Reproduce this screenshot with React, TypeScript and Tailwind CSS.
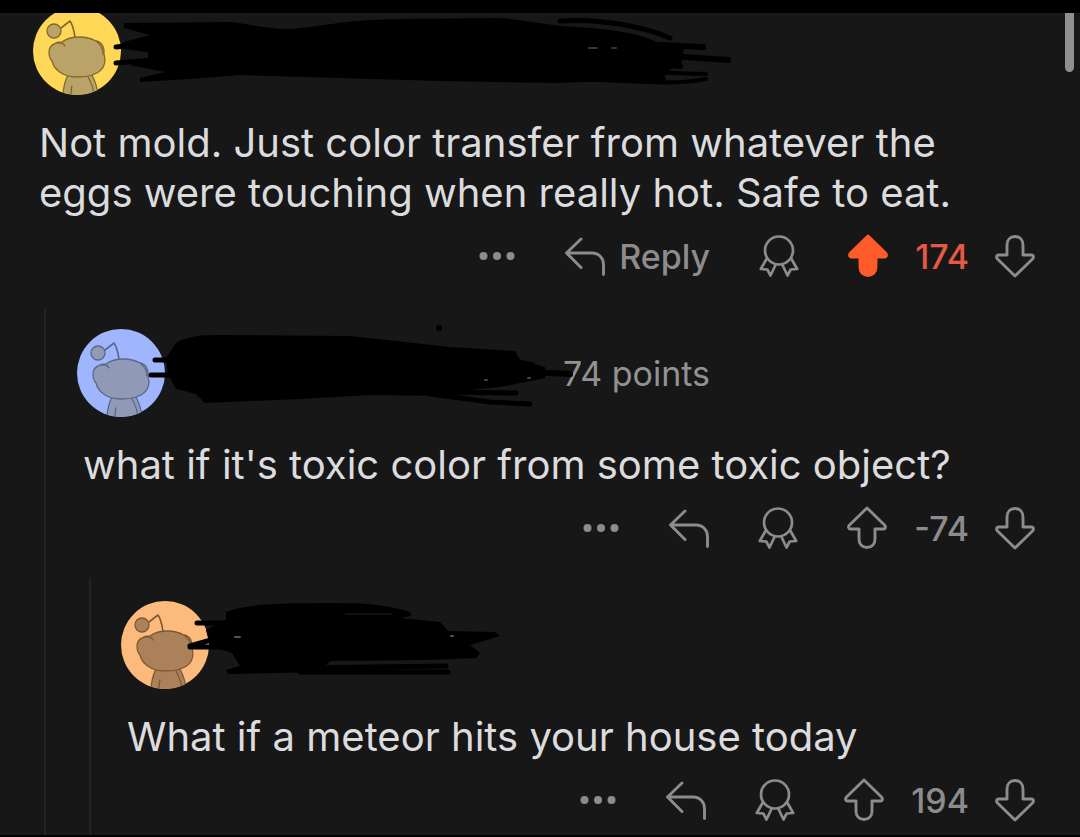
import type { ReactNode } from "react";

type Palette = { bg: string; body: string; line: string };

const yellow: Palette = { bg: "#ffd858", body: "#b9a368", line: "#80692c" };
const blue: Palette = { bg: "#9fb5fd", body: "#9099b6", line: "#5c6789" };
const orange: Palette = { bg: "#fcba7d", body: "#aa8159", line: "#7d5933" };

function Avatar({ palette, id }: { palette: Palette; id: string }) {
  return (
    <svg viewBox="0 0 88 88" className="size-[88px] shrink-0" aria-hidden="true">
      <clipPath id={id}>
        <circle cx="44" cy="44" r="44" />
      </clipPath>
      <g clipPath={`url(#${id})`} stroke={palette.line} strokeWidth="1.3" strokeLinecap="round" strokeLinejoin="round">
        <rect width="88" height="88" fill={palette.bg} stroke="none" />
        <path d="M35 68C32 74 30 80 30 90H65C65 82 62 74 59 68Z" fill={palette.body} />
        <path d="M39 79C38 82 38 85 38 90M55 70C59 77 61 82 61 90" fill="none" />
        <path
          d="M16 45C16 38 23 35 29 35C34 31 41 30 47 30C54 30 59 32 63 34C69 35 72 41 71 47C74 58 70 70 44 70C29 70 21 62 19 54C17 52 16 49 16 45Z"
          fill={palette.body}
        />
        <path d="M25 36C29 35 31 37 32 39M63 34C67 37 70 41 70 47" fill="none" />
        <circle cx="21" cy="24" r="7" fill={palette.body} />
        <path d="M28 21L37 14C40 18 41 24 42 30" fill="none" strokeWidth="1.6" />
      </g>
    </svg>
  );
}

const stroke = {
  fill: "none",
  stroke: "currentColor",
  strokeWidth: 2.9,
  strokeLinecap: "round",
  strokeLinejoin: "round",
} as const;

function Dots() {
  return (
    <svg viewBox="0 0 36 12" className="h-3 w-9" fill="currentColor" aria-hidden="true">
      <circle cx="4.5" cy="6" r="4" />
      <circle cx="18" cy="6" r="4" />
      <circle cx="31.5" cy="6" r="4" />
    </svg>
  );
}

function ReplyIcon() {
  return (
    <svg viewBox="0 0 40 44" className="h-11 w-10" {...stroke} aria-hidden="true">
      <path d="M16 5L1.5 19L16 33.5M1.5 19H27C34 19 38.5 24 38.5 31V40.5" />
    </svg>
  );
}

function AwardIcon() {
  return (
    <svg viewBox="0 0 40 44" className="h-11 w-10" {...stroke} strokeWidth={2.7} aria-hidden="true">
      <circle cx="20" cy="16.5" r="14" />
      <path d="M7.5 25L1.8 35L8.3 35.5L11.5 41.5L16.5 31M32.5 25L38.2 35L31.7 35.5L28.5 41.5L23.5 31" />
    </svg>
  );
}

function VoteIcon({ down = false, active = false }: { down?: boolean; active?: boolean }) {
  return (
    <svg
      viewBox="0 0 40 44"
      className={down ? "h-11 w-10 rotate-180" : "h-11 w-10"}
      {...stroke}
      fill={active ? "currentColor" : "none"}
      aria-hidden="true"
    >
      <path d="M20 2L37.5 19C39.2 21 38.3 23 36.5 23H28V33C28 38 25 41.500 20 41.500C15 41.500 12 38 12 33V23H3.500C1.700 23 .8 21 2.500 19Z" />
    </svg>
  );
}

function Actions({ score, upvoted = false, showReplyLabel = false }: { score: string; upvoted?: boolean; showReplyLabel?: boolean }) {
  return (
    <div className="mt-[13px] flex h-[50px] items-center justify-end pr-[45px] text-[34px] font-medium text-[#8c8c8e]">
      <button type="button" aria-label="More options" className="mr-[50px]">
        <Dots />
      </button>
      <button type="button" aria-label="Reply" className="mr-[49px] flex items-center gap-[14px]">
        <ReplyIcon />
        {showReplyLabel && <span>Reply</span>}
      </button>
      <button type="button" aria-label="Give award" className="mr-[49px]">
        <AwardIcon />
      </button>
      <button type="button" aria-label="Upvote" className={upvoted ? "mr-[27px] text-[#ff5a29]" : "mr-[27px]"}>
        <VoteIcon active={upvoted} />
      </button>
      <span className={upvoted ? "mr-[26px] text-[#e55a45]" : "mr-[26px]"}>{score}</span>
      <button type="button" aria-label="Downvote">
        <VoteIcon down />
      </button>
    </div>
  );
}

function Comment({ header, children }: { header: ReactNode; children: ReactNode }) {
  return (
    <>
      <header className="flex items-center">{header}</header>
      <p className="mt-[23px] pr-24 pl-1.5 text-[40px] leading-[50px] text-[#dcdcde]">{children}</p>
    </>
  );
}

function ScribbleLong() {
  return (
    <svg viewBox="101 7 640 88" className="relative -ml-5 h-[88px] w-[640px] shrink-0 overflow-visible" aria-hidden="true">
      <path d="M124 23L230 22C250 24 265 29 290 29C320 27 340 20 400 19L500 18C525 20 545 25 575 27C610 29 640 33 656 42L684 46L682 62L664 74L668 84C640 85 600 80 560 83L440 81L240 75L190 79L140 82L140 78L165 72L130 65L148 60L148 52L116 48L124 42L150 35L124 28Z" />
      <g fill="none" stroke="#000" strokeLinecap="round">
        <path d="M116 47L160 42M116 63L165 59M560 21C600 18 645 27 670 38" strokeWidth="5" />
        <path d="M640 44L703 47M640 54L728 60M640 62L680 66" strokeWidth="6" />
        <path d="M640 72L706 74M640 81C670 84 690 82 706 79" strokeWidth="4" />
      </g>
      <path d="M589 48H597M612 48H616" stroke="#363636" strokeWidth="2" strokeLinecap="round" />
    </svg>
  );
}

function ScribbleMedium() {
  return (
    <svg viewBox="145 329 420 88" className="relative -ml-5 h-[88px] w-[420px] shrink-0 overflow-visible" aria-hidden="true">
      <path d="M176 343C190 334 210 335 230 335L350 336L450 347L515 351L520 360L545 367L545 378L500 387L470 390L450 396L370 395L300 399L205 403L196 394L176 389L168 374L166 358Z" />
      <g fill="none" stroke="#000" strokeLinecap="round">
        <path d="M155 360H185M151 375H185" strokeWidth="5" />
        <path d="M480 356L532 365M480 379L530 372L570 374" strokeWidth="6" />
        <path d="M440 392L516 393M430 394L490 402L530 404" strokeWidth="5" />
      </g>
      <circle cx="439" cy="328" r="3" />
      <path d="M485 380H487M528 378H530" stroke="#444" strokeWidth="2" strokeLinecap="round" />
    </svg>
  );
}

function ScribbleShort() {
  return (
    <svg viewBox="189 601 320 88" className="relative -ml-5 h-[88px] w-[320px] shrink-0 overflow-visible" aria-hidden="true">
      <path d="M226 612C250 603 290 603 340 603C370 603 390 606 410 612L411 616L400 618L440 622L448 631L495 632L500 636L470 645L480 653L476 658L430 660L330 661L320 672L228 674L226 670L240 666L232 653L210 646L206 630L226 620Z" />
      <g fill="none" stroke="#000" strokeLinecap="round">
        <path d="M197 623H240M190 646L225 636M190 647H235" strokeWidth="5" />
        <path d="M300 668L446 666M300 672L448 672" strokeWidth="5" />
      </g>
      <path d="M345 614H392" stroke="#101010" strokeWidth="2" />
      <path d="M235 637H240M451 636H453" stroke="#555" strokeWidth="2" strokeLinecap="round" />
    </svg>
  );
}

export default function App() {
  return (
    <div className="min-h-screen bg-black pt-[13px] pb-0.5 font-[Inter,sans-serif]">
      <main className="relative overflow-hidden bg-[#171717]">
        <div className="absolute top-0 right-1.5 h-[59px] w-[9px] rounded-b-full bg-[#8f8f8f]" />
        <article className="-mt-1.5">
          <div className="pl-[33px]">
            <Comment header={<><Avatar palette={yellow} id="avatar-a" /><ScribbleLong /></>}>
              Not mold. Just color transfer from whatever the eggs were touching when really hot. Safe to eat.
            </Comment>
          </div>
          <Actions score="174" upvoted showReplyLabel />

          <article className="mt-[27px] ml-11 border-l-2 border-[#232323] pt-[21px]">
            <div className="pl-[31px]">
              <Comment
                header={
                  <>
                    <Avatar palette={blue} id="avatar-b" />
                    <ScribbleMedium />
                    <span className="-ml-0.5 text-[34px] whitespace-nowrap text-[#929294]">74 points</span>
                  </>
                }
              >
                what if it's toxic color from some toxic object?
              </Comment>
            </div>
            <Actions score="-74" />

            <article className="mt-[25px] ml-[43px] border-l-2 border-[#232323] pt-[23px] pb-2.5">
              <div className="pl-[30px]">
                <Comment header={<><Avatar palette={orange} id="avatar-c" /><ScribbleShort /></>}>
                  What if a meteor hits your house today
                </Comment>
              </div>
              <Actions score="194" />
            </article>
          </article>
        </article>
      </main>
    </div>
  );
}
